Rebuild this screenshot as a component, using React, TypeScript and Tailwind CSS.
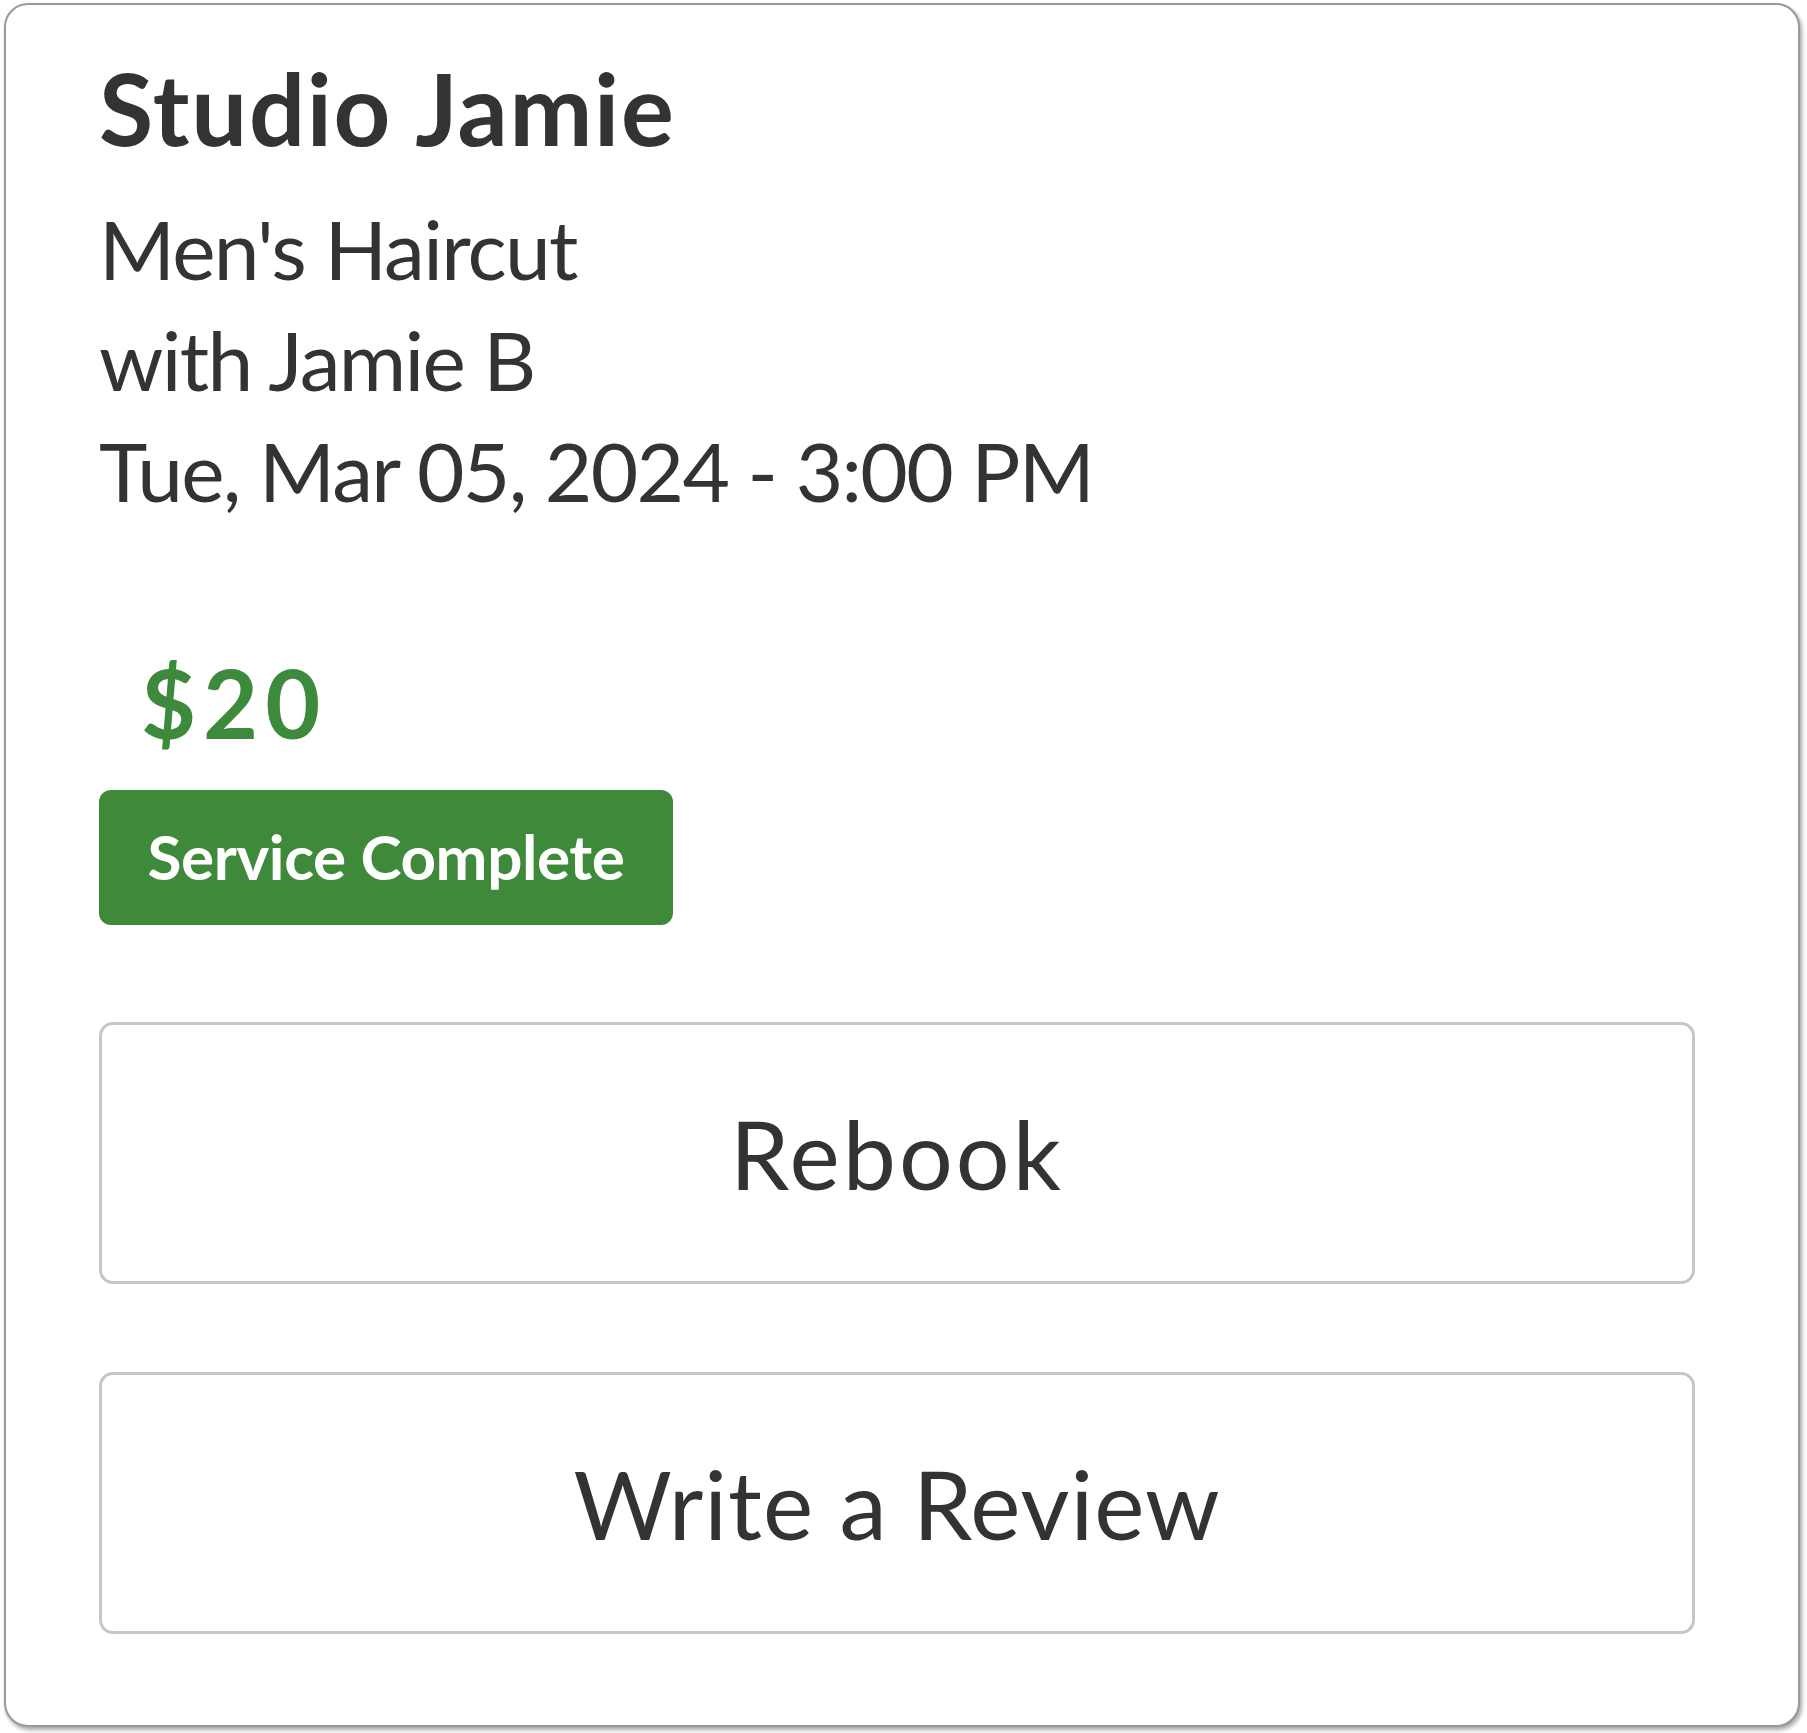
import React from "react";

const ink = "text-[#333333]";

function OutlineButton({ label, tracking }: { label: string; tracking: string }) {
  return (
    <button
      type="button"
      className={`flex h-[262px] w-[1596px] items-center justify-center rounded-[14px] border-[3px] border-[#c6c6c6] bg-white text-[95px] leading-none ${tracking} ${ink}`}
    >
      {label}
    </button>
  );
}

export default function App() {
  return (
    <div className="min-h-screen bg-white pt-[3px] pl-[4px]" style={{ fontFamily: "Lato, 'Open Sans', sans-serif" }}>
      <div className="h-[1724px] w-[1796px] rounded-[24px] border-2 border-[#999999] bg-white pl-[93px] pt-[53px] shadow-[2px_3px_4px_rgba(0,0,0,0.35)]">
        <h1 className={`text-[99px] font-bold leading-none tracking-[1.7px] ${ink}`}>Studio Jamie</h1>

        <div className={`mt-[36px] text-[82px] leading-[111px] tracking-[-1.7px] ${ink}`}>
          <p>Men's Haircut</p>
          <p>with Jamie B</p>
          <p>Tue, Mar 05, 2024 - 3:00 PM</p>
        </div>

        <p className="ml-[42px] mt-[129px] text-[95px] font-bold leading-none tracking-[7px] text-[#3d8a3c]">$20</p>

        <div className="mt-[40px] flex h-[135px] w-[574px] items-center justify-center rounded-[12px] bg-[#3e8a3a] pb-[4px] text-[62px] font-bold leading-none tracking-[-0.4px] text-white">
          Service Complete
        </div>

        <div className="mt-[97px] flex flex-col gap-[88px]">
          <OutlineButton label="Rebook" tracking="tracking-[3px]" />
          <OutlineButton label="Write a Review" tracking="tracking-[1px]" />
        </div>
      </div>
    </div>
  );
}
